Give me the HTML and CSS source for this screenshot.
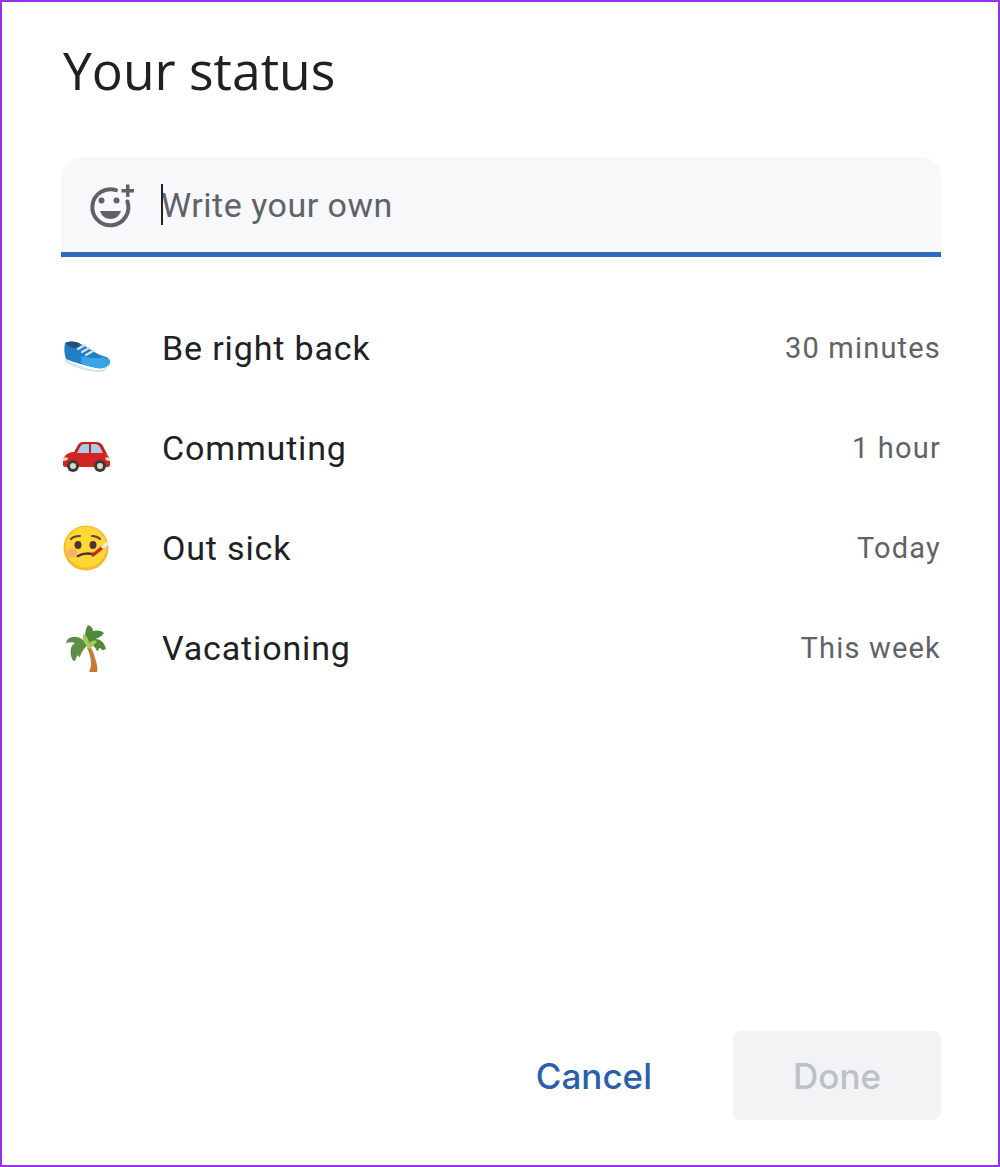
FILE: index.html
```html
<!DOCTYPE html>
<html lang="en">

<head>
    <meta charset="UTF-8">
    <meta name="viewport" content="width=device-width, initial-scale=1.0">
    <title>Your status</title>
    <link rel="stylesheet" href="styles.css">
</head>

<body>
    <div class="dialog">
        <h1 class="title">Your status</h1>

        <!-- campo de estado -->
        <div class="field">
            <svg class="field-icon" viewBox="0 0 48 48" width="48" height="48">
                <path d="M30 9.200a18 18 0 1 0 11.400 11.300" fill="none" stroke="#5f6368" stroke-width="4" stroke-linecap="round"/>
                <circle cx="15.500" cy="19.500" r="3" fill="#5f6368"/>
                <circle cx="30.500" cy="19.500" r="3" fill="#5f6368"/>
                <path d="M14 30h21c-1.500 5-5.500 8-10.500 8s-9-3-10.500-8z" fill="#5f6368"/>
                <path d="M40 3.500h3.500V8H48v3.500h-4.500V16H40v-4.500h-4.500V8H40z" fill="#5f6368"/>
            </svg>
            <div class="field-text"><span class="caret"></span>Write your own</div>
        </div>

        <!-- estados predefinidos -->
        <div class="list">
            <div class="row">
                <svg class="emoji" viewBox="0 0 52 52" width="52" height="52">
                    <path d="M4 37c8 5 22 10 32 11 4 0 8-1 10-3l-2 4c-6 2-12 1-20-1-8-2-16-5-20-8z" fill="#d5e3ee"/>
                    <path d="M4 21c4-2 10-1 14 0l6 3c6 4 12 8 18 10 5 1 8 4 7 7-2 4-7 6-13 5-10-2-24-6-31-9-2-5-2-11-1-16z" fill="#1e7fc4"/>
                    <path d="M20 34c8 2 16 3 22 1 5 1 8 3 7 6-2 4-7 6-13 5-6-1-12-3-16-5z" fill="#38a3e6"/>
                    <path d="M5 21c4-2 10-2 14 1-1 3-4 4-7 4-3-1-6-3-7-5z" fill="#2c4f6b"/>
                    <path d="M17 27l7-4M21 30l7-4M25 33l7-4" stroke="#d5e3ee" stroke-width="2.200" stroke-linecap="round"/>
                </svg>
                <span class="name">Be right back</span>
                <span class="time">30 minutes</span>
            </div>
            <div class="row">
                <svg class="emoji" viewBox="0 0 52 52" width="52" height="52">
                    <path d="M12 32l5-9c1-2 3-3 5-3h13c3 0 5 1 7 4l4 8z" fill="#c81e1e"/>
                    <path d="M2 40c0-5 3-9 10-10h28c6 1 9 5 9 10v3c0 1-1 2-2 2H4c-1 0-2-1-2-2z" fill="#d32424"/>
                    <path d="M16 31l3-6c.5-1 2-3 4-3h5v9zM30 22h4c2 0 4 1 5 3l3 6H30z" fill="#a8cbe6"/>
                    <path d="M2 36c2-1 4-1 5 0 0 2-2 3-5 3zM49 36c-2-1-4-1-5 0 0 2 2 3 5 3z" fill="#f3d9a6"/>
                    <circle cx="12" cy="44" r="6" fill="#3c3c3c"/>
                    <circle cx="12" cy="44" r="3" fill="#d8d8d8"/>
                    <circle cx="39" cy="44" r="6" fill="#3c3c3c"/>
                    <circle cx="39" cy="44" r="3" fill="#d8d8d8"/>
                </svg>
                <span class="name">Commuting</span>
                <span class="time">1 hour</span>
            </div>
            <div class="row">
                <svg class="emoji" viewBox="0 0 52 52" width="52" height="52">
                    <circle cx="25" cy="26" r="22.500" fill="#f5b82e"/>
                    <circle cx="25" cy="25" r="20.500" fill="#fdd835"/>
                    <ellipse cx="11" cy="31" rx="5.500" ry="4.500" fill="#f6a27a" opacity=".7"/>
                    <path d="M10 17c2-2 5-3 9-3M31 14c4 0 6 1 8 3" fill="none" stroke="#5d4037" stroke-width="2" stroke-linecap="round"/>
                    <ellipse cx="17" cy="23" rx="3.500" ry="4" fill="#4e342e"/>
                    <ellipse cx="32" cy="23" rx="3.500" ry="4" fill="#4e342e"/>
                    <path d="M17 34c4-2.500 10-3 15-2" fill="none" stroke="#4e342e" stroke-width="2.500" stroke-linecap="round"/>
                    <path d="M32 33l10-8" stroke="#c62828" stroke-width="3.500" stroke-linecap="round"/>
                    <path d="M42 25l5-4" stroke="#eceff1" stroke-width="3.500" stroke-linecap="round"/>
                </svg>
                <span class="name">Out sick</span>
                <span class="time">Today</span>
            </div>
            <div class="row">
                <svg class="emoji" viewBox="0 0 52 52" width="52" height="52">
                    <path d="M26 26c3 6 4 11 4 16 0 3-1 6-2 8h8c1-3 0-8-2-14-1-4-2-7-4-10z" fill="#c77b30"/>
                    <path d="M26 22c-4-5-9-8-14-7-3 0-6 2-7 6 4-1 7-1 9 0-4 2-5 7-4 13 1 3 2 5 4 5 1-3 2-5 3-6 0 1 1 2 2 2 1-5 4-9 9-13z" fill="#5b8f45"/>
                    <path d="M26 21c-3-6-2-13 1-18 3 1 5 3 5 6 3-1 8-1 11 2-2 3-5 5-9 6 4 0 9 2 11 10-2 1-3 1-4 1-1-2-2-2-3-2 0 1-1 3-2 3-2-5-6-8-10-8z" fill="#4e8a38"/>
                    <path d="M25 23c-2-3-4-7-3-11 3 1 6 5 6 9 2-2 5-3 8-2-2 3-5 7-9 8z" fill="#a5c95a"/>
                </svg>
                <span class="name">Vacationing</span>
                <span class="time">This week</span>
            </div>
        </div>

        <div class="actions">
            <button class="btn btn-cancel">Cancel</button>
            <button class="btn btn-done">Done</button>
        </div>
    </div>
</body>

</html>
```

FILE: styles.css
```css
/* Reset */
* {
    margin: 0;
    padding: 0;
    box-sizing: border-box;
}

html,
body {
    height: 100%;
    background-color: #ffffff;
    font-family: 'Roboto', sans-serif;
}

/* Contenedor con el marco morado */
.dialog {
    display: flex;
    flex-direction: column;
    height: 100%;
    padding: 33px 57px 45px 59px;
    border: 2px solid #9333ea;
}

.title {
    padding-left: 2px;
    font-family: 'Open Sans', sans-serif;
    font-size: 51.6px;
    line-height: 70px;
    font-weight: 400;
    color: #202124;
}

/* Campo de texto */
.field {
    display: flex;
    align-items: center;
    gap: 27px;
    height: 100px;
    margin-top: 52px;
    padding-left: 25px;
    background-color: #f7f8fa;
    border-bottom: 5px solid #2f6bbf;
    border-radius: 20px 20px 0 0;
}

.field-icon {
    flex-shrink: 0;
}

.field-text {
    position: relative;
    font-size: 34px;
    letter-spacing: 0.5px;
    color: #5f6368;
}

.caret {
    position: absolute;
    left: 0;
    top: -1px;
    width: 2px;
    height: 41px;
    background-color: #202124;
}

/* Lista de estados */
.list {
    margin-top: 41px;
}

.row {
    display: flex;
    align-items: center;
    height: 100px;
}

.emoji {
    flex-shrink: 0;
    margin-right: 49px;
}

.name {
    font-size: 34px;
    letter-spacing: 0.85px;
    color: #202124;
}

.time {
    margin-left: auto;
    font-size: 29px;
    letter-spacing: 1.2px;
    color: #5f6368;
}

/* Botones */
.actions {
    display: flex;
    justify-content: flex-end;
    align-items: center;
    gap: 81px;
    margin-top: auto;
}

.btn {
    border: none;
    background: none;
    font-family: 'Inter', sans-serif;
    font-size: 35px;
    line-height: 38px;
    font-weight: 500;
}

.btn-cancel {
    color: #2a5fad;
}

.btn-done {
    width: 208px;
    height: 89px;
    border-radius: 8px;
    background-color: #f1f3f4;
    color: #bdc1c6;
}
```
